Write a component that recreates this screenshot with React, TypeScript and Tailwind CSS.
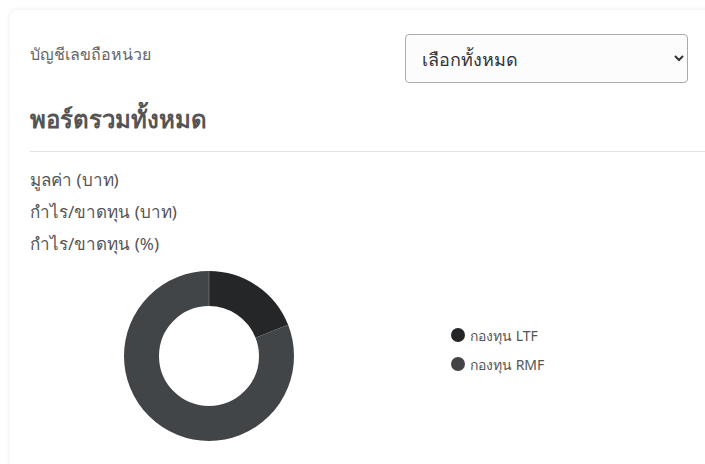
import React from "react";

const slices = [
  { label: "กองทุน LTF", value: 19, color: "#252627" },
  { label: "กองทุน RMF", value: 81, color: "#424548" },
];

function Donut() {
  const cx = 85;
  const cy = 85;
  const r = 67.5;
  const circ = 2 * Math.PI * r;
  let offset = 0;
  return (
    <svg width="170" height="170" viewBox="0 0 170 170">
      {slices.map((s) => {
        const len = (s.value / 100) * circ;
        const el = (
          <circle
            key={s.label}
            cx={cx}
            cy={cy}
            r={r}
            fill="none"
            stroke={s.color}
            strokeWidth="35"
            strokeDasharray={`${len} ${circ - len}`}
            strokeDashoffset={-offset}
            transform={`rotate(-90 ${cx} ${cy})`}
          />
        );
        offset += len;
        return el;
      })}
      <line x1="85" y1="0" x2="85" y2="35" stroke="#888" strokeWidth="0.6" />
    </svg>
  );
}

export default function App() {
  return (
    <div className="h-[464px] w-[705px] overflow-hidden bg-white pl-[10px] pt-[10px] font-['Noto_Sans',sans-serif]">
      <div className="h-[480px] w-[720px] rounded-lg bg-white pl-5 pt-[24px] shadow-[0_0_6px_rgba(0,0,0,0.08)]">
        <div className="flex items-start justify-between pr-[42px]">
          <span className="pt-[8px] text-[16px] text-[#666]">บัญชีเลขถือหน่วย</span>
          <select className="h-[49px] w-[283px] rounded border border-[#aaa] bg-[#fcfcfc] px-[12px] text-[18px] text-[#333]">
            <option>เลือกทั้งหมด</option>
          </select>
        </div>
        <h2 className="mt-[18px] text-[24px] font-bold text-[#555]">พอร์ตรวมทั้งหมด</h2>
        <div className="mt-[14px] border-t border-[#e3e3e3]" />
        <div className="mt-[15px] flex flex-col gap-[7px] text-[17px] leading-[25px] text-[#555]">
          <div>มูลค่า (บาท)</div>
          <div>กำไร/ขาดทุน (บาท)</div>
          <div>กำไร/ขาดทุน (%)</div>
        </div>
        <div className="mt-[15px] flex items-center">
          <div className="ml-[94px]">
            <Donut />
          </div>
          <div className="mb-[13px] ml-[157px] flex flex-col gap-[8px] text-[14px] text-[#555]">
            {slices.map((s) => (
              <div key={s.label} className="flex items-center gap-[5px]">
                <span className="inline-block h-[14px] w-[14px] rounded-full" style={{ background: s.color }} />
                {s.label}
              </div>
            ))}
          </div>
        </div>
      </div>
    </div>
  );
}
